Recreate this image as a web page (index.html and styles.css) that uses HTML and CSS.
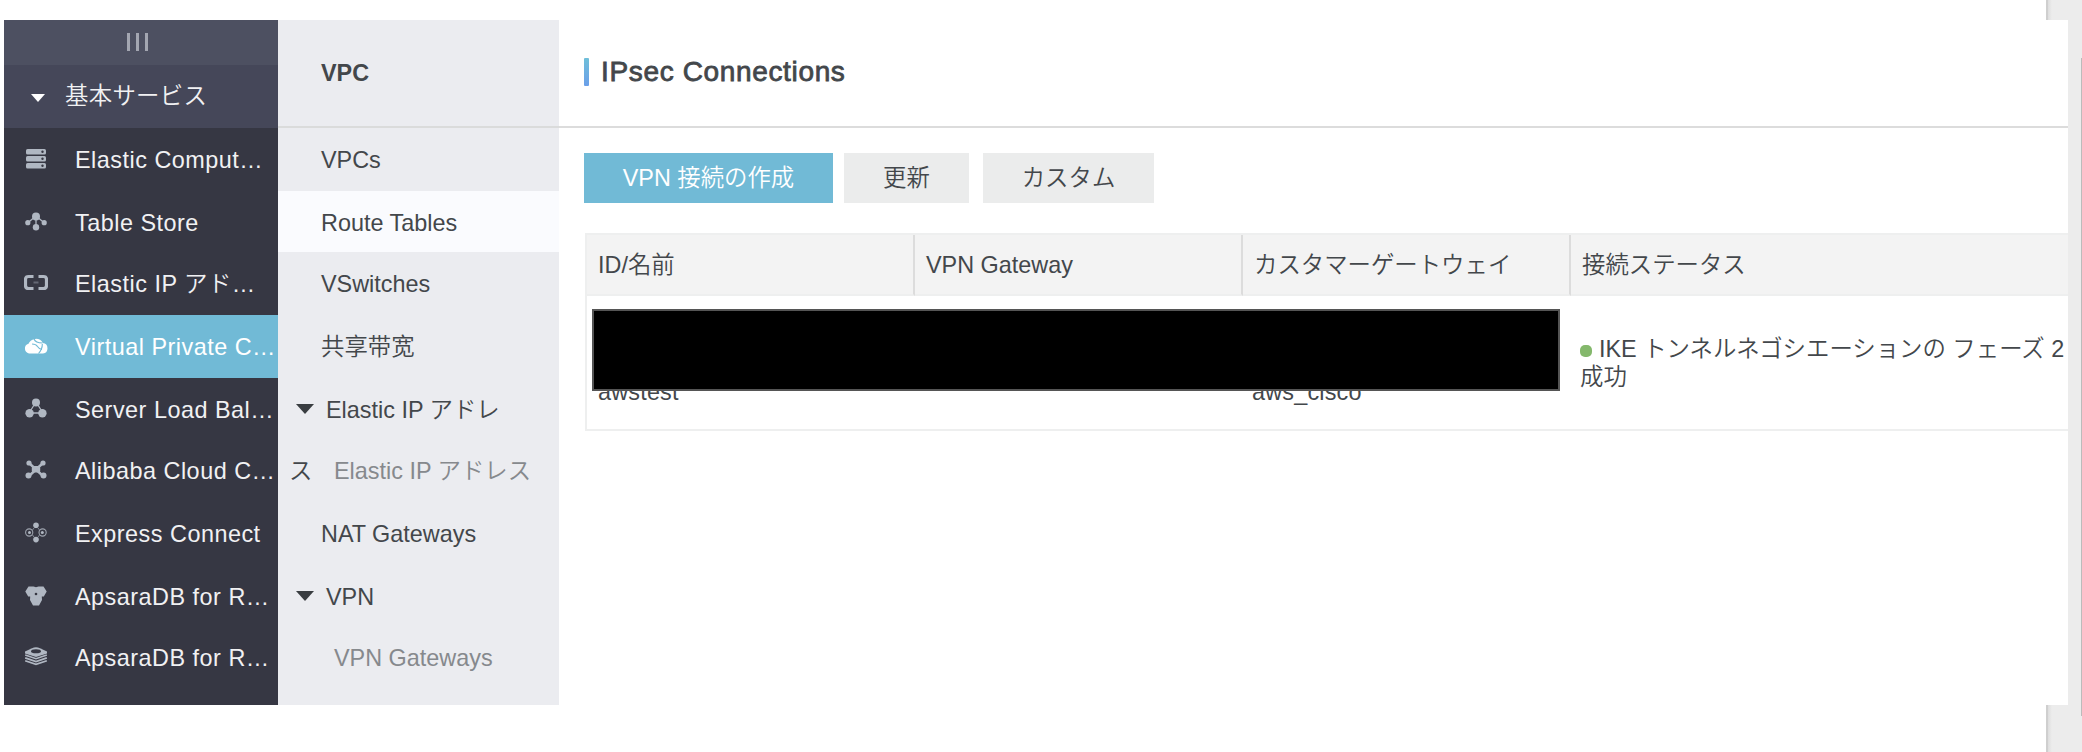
FILE: index.html
```html
<!DOCTYPE html>
<html lang="ja">
<head>
  <meta charset="UTF-8">
  <title>IPsec Connections</title>
  <link rel="stylesheet" href="styles.css">
</head>
<body>
  <div class="scrollbar"></div>
  <div class="console">

    <!-- サービスメニュー -->
    <div class="sidebar">
      <div class="fold"><span></span><span></span><span></span></div>
      <div class="group"><i class="arrow"></i>基本サービス</div>
      <ul>
        <li>
          <svg viewBox="0 0 24 24"><rect x="2" y="2" width="20" height="5.6" rx="1.6"/><rect x="2" y="9" width="20" height="5.6" rx="1.6"/><rect x="2" y="16" width="20" height="5.6" rx="1.6"/><g class="hole"><circle cx="18.5" cy="4.8" r="1.2"/><circle cx="18.5" cy="11.8" r="1.2"/><circle cx="18.5" cy="18.8" r="1.2"/></g></svg>
          <span>Elastic Comput…</span>
        </li>
        <li>
          <svg viewBox="0 0 24 24"><path class="line" d="M12 6L3.5 13M12 6L20.5 13M12 6V18"/><circle cx="12" cy="6.5" r="4"/><circle cx="3.8" cy="12.7" r="2.6"/><circle cx="20.2" cy="12.7" r="2.6"/><circle cx="12" cy="17.2" r="3.2"/></svg>
          <span>Table Store</span>
        </li>
        <li>
          <svg viewBox="0 0 24 24"><path class="bracket" d="M9.5 5.5H4.5Q1.5 5.5 1.5 8.5V14.5Q1.5 17.5 4.5 17.5H9.5M14.5 5.5H19.5Q22.5 5.5 22.5 8.5V14.5Q22.5 17.5 19.5 17.5H14.5"/><path class="dim" d="M9.5 11.5H14.5"/></svg>
          <span>Elastic IP アド…</span>
        </li>
        <li class="active">
          <svg viewBox="0 0 24 24"><path d="M5 19.5A5 5 0 0 1 4.5 9.8A7.8 7.5 0 0 1 18.8 9A5.3 5.3 0 0 1 19 19.5Z"/><path class="cut" d="M10 5Q11.5 9 18.5 9M14.5 19.5Q18.5 15 18.3 10M8 10Q12 10 13.5 12.5T18 15.5"/></svg>
          <span>Virtual Private C…</span>
        </li>
        <li>
          <svg viewBox="0 0 24 24"><path class="line" d="M12 5L5 16H19Z"/><circle cx="12" cy="5.5" r="4"/><circle cx="5.6" cy="16.2" r="4.2"/><circle cx="18.4" cy="16.2" r="4.2"/></svg>
          <span>Server Load Bal…</span>
        </li>
        <li>
          <svg viewBox="0 0 24 24"><path class="thick" d="M5 5L19 18M19 5L5 18"/><rect x="7.8" y="8" width="8.4" height="6.5" rx="2"/><circle cx="5" cy="5" r="2.6"/><circle cx="19" cy="5" r="2.6"/><circle cx="4.5" cy="17.5" r="3"/><circle cx="19.5" cy="17.5" r="3"/></svg>
          <span>Alibaba Cloud C…</span>
        </li>
        <li>
          <svg viewBox="0 0 24 24"><circle class="ring" cx="5.2" cy="11.5" r="3.6"/><circle class="ring" cx="18.6" cy="11.5" r="3.6"/><circle cx="5.5" cy="11.5" r="1.5"/><circle cx="18.3" cy="11.5" r="1.5"/><circle cx="12" cy="4.3" r="2.8"/><circle cx="12" cy="18.6" r="2.8"/><path class="thin" d="M10 7L8.5 9M14 7L15.5 9M10 16L8.5 14M14 16L15.5 14"/></svg>
          <span>Express Connect</span>
        </li>
        <li>
          <svg viewBox="0 0 24 24"><path d="M4.5 2.5H9.5L12 3.2L14.5 2.5H19.5L22.7 7.5L19.8 12.5H17.8L18 16L15 21.5H9L6 16L6.2 12.5H4.2L1.3 7.5Z"/><circle class="hole" cx="12" cy="10" r="1.3"/></svg>
          <span>ApsaraDB for R…</span>
        </li>
        <li>
          <svg viewBox="0 0 24 24"><path d="M1 6.5L8 3.2Q12 1.5 16 3.2L23 6.5V8.5L12 12L1 8.5Z"/><ellipse class="hole" cx="12" cy="6.2" rx="5" ry="2"/><path class="layer" d="M1.2 10L12 13.7L22.8 10M1.2 12.9L12 16.6L22.8 12.9M1.2 15.7L12 19.4L22.8 15.7"/></svg>
          <span>ApsaraDB for R…</span>
        </li>
      </ul>
    </div>

    <!-- VPCメニュー -->
    <div class="subnav">
      <h2>VPC</h2>
      <ul>
        <li>VPCs</li>
        <li class="selected">Route Tables</li>
        <li>VSwitches</li>
        <li lang="zh" class="cn">共享带宽</li>
        <li class="parent"><i class="arrow"></i>Elastic IP アドレ</li>
        <li class="child"><b>ス</b><span>Elastic IP アドレス</span></li>
        <li>NAT Gateways</li>
        <li class="parent"><i class="arrow"></i>VPN</li>
        <li class="child"><b></b><span>VPN Gateways</span></li>
      </ul>
    </div>

    <div class="main">
      <div class="title"><h1>IPsec Connections</h1></div>
      <div class="content">
        <div class="buttons">
          <button class="primary">VPN 接続の作成</button>
          <button class="refresh">更新</button>
          <button class="custom">カスタム</button>
        </div>
        <div class="list">
          <table>
            <tr>
              <th>ID/名前</th>
              <th>VPN Gateway</th>
              <th>カスタマーゲートウェイ</th>
              <th>接続ステータス</th>
            </tr>
            <tr>
              <td class="name">awstest</td>
              <td></td>
              <td class="name customer">aws_cisco</td>
              <td class="status"><i class="dot"></i><span>IKE トンネルネゴシエーションの フェーズ 2</span><br>成功</td>
            </tr>
          </table>
          <div class="mask"></div>
        </div>
      </div>
    </div>

  </div>
</body>
</html>
```

FILE: styles.css
```css
*{box-sizing: border-box;}
body{
  margin: 0;
  height: 752px;
  padding: 20px 0 0 4px;
  position: relative;
  overflow: hidden;
  background-color: #fff;
  color: #43474b;
  font-family: "Liberation Sans", "Noto Sans CJK JP", sans-serif;
  font-size: 23.4px;
  font-weight: 350;
}
ul{
  list-style-type: none;
  margin: 0;
  padding: 0;
}
h1, h2{margin: 0;}

/* 後ろのスクロールバー */
.scrollbar{
  position: absolute;
  top: 0;
  right: 0;
  width: 36px;
  height: 752px;
  background: linear-gradient(to right, #cfcfcf 0, #cfcfcf 2px, #dedede 2px, #ececec 6px);
}
.scrollbar:after{
  content: '';
  position: absolute;
  top: 58px;
  right: 0;
  width: 1px;
  height: 658px;
  background-color: #bbb;
}
.console{
  position: relative;
  display: flex;
  width: 2064px;
  height: 685px;
  background-color: #fff;
}

/* メニューの行 */
.sidebar li, .subnav li{
  display: flex;
  align-items: flex-start;
  height: 63px;
  line-height: 64px;
  white-space: nowrap;
}
.sidebar li:nth-child(3n+2), .subnav li:nth-child(3n+2){height: 61px;}

/* サービスメニュー */
.sidebar{
  width: 274px;
  flex: none;
  background-color: #363743;
  color: #f1f1f3;
}
.fold{
  display: flex;
  justify-content: center;
  gap: 6px;
  height: 45px;
  padding: 13px 8px 0 0;
  background-color: #4d5061;
}
.fold span{
  width: 3px;
  height: 18px;
  background-color: #a3a6b1;
}
.group{
  display: flex;
  align-items: center;
  height: 63px;
  padding-left: 27px;
  background-color: #454759;
  letter-spacing: .3px;
  line-height: 63px;
}
.group .arrow{
  margin: 2px 20px 0 0;
  border: 7px solid transparent;
  border-top: 8px solid #fff;
  border-bottom: 0;
}
.sidebar li{
  padding-left: 20px;
  letter-spacing: .5px;
}
.sidebar li.active{
  background-color: #71bad6;
  color: #fff;
}
.sidebar svg{
  width: 24px;
  height: 24px;
  flex: none;
  margin: 19px 27px 0 0;
  fill: #b0b7c2;
}
.sidebar svg .hole{fill: #363743;}
.sidebar svg .line{fill: none; stroke: #b0b7c2; stroke-width: 1.3;}
.sidebar svg .thick{stroke: #b0b7c2; stroke-width: 2.4;}
.sidebar svg .bracket{fill: none; stroke: #b0b7c2; stroke-width: 3.2;}
.sidebar svg .dim{stroke: #656875; stroke-width: 2;}
.sidebar svg .ring{fill: none; stroke: #9da3ae; stroke-width: 1.1;}
.sidebar svg .thin{stroke: #858b97; stroke-width: 1;}
.sidebar svg .layer{fill: none; stroke: #b0b7c2; stroke-width: 1.7;}
.sidebar .active svg{fill: #fff;}
.sidebar .active .cut{fill: none; stroke: #71bad6; stroke-width: 1.1;}

/* VPCメニュー */
.subnav{
  width: 281px;
  flex: none;
  background-color: #ebecf0;
}
.subnav h2{
  height: 108px;
  padding-left: 43px;
  border-bottom: 2px solid #dadbdb;
  font-size: 23.4px;
  line-height: 106px;
}
.subnav li{padding-left: 43px;}
.subnav .selected{background-color: #fafbfe;}
.subnav .cn{
  font-family: "Noto Sans CJK SC", sans-serif;
  line-height: 61px;
}
.subnav .parent{padding-left: 18px;}
.subnav .arrow{
  margin: 26px 12px 0 0;
  border: 9px solid transparent;
  border-top: 10px solid #393d41;
  border-bottom: 0;
}
.subnav .child{padding-left: 11px;}
.subnav .child b{
  width: 45px;
  font-weight: 350;
}
.subnav .child span{color: #86898d;}

/* コンテンツ */
.main{
  flex: 1;
  min-width: 0;
}
.title{
  display: flex;
  align-items: center;
  height: 108px;
  padding: 0 0 2px 25px;
  border-bottom: 2px solid #dcdcdc;
}
.title:before{
  content: '';
  width: 5px;
  height: 28px;
  border-radius: 1px;
  background: linear-gradient(#6fbfd9, #6b9fe9);
}
.title h1{
  padding-left: 12px;
  font-size: 28px;
  font-weight: normal;
  letter-spacing: .65px;
  -webkit-text-stroke: .8px #43474b;
}
.content{padding: 25px 0 0 25px;}
.buttons{
  display: flex;
  height: 50px;
}
.buttons button{
  border: 0;
  padding: 0;
  background-color: #ebecec;
  color: #43474b;
  font: inherit;
  line-height: 50px;
}
.buttons .primary{
  width: 249px;
  margin-right: 11px;
  background-color: #71bad6;
  color: #fff;
}
.buttons .refresh{
  width: 125px;
  margin-right: 14px;
}
.buttons .custom{width: 171px;}
.list{
  position: relative;
  margin: 30px 0 0 1px;
}
table{
  width: 100%;
  table-layout: fixed;
  border-collapse: separate;
  border-spacing: 0;
  border: 2px solid #eeefef;
  border-right: 0;
}
th{
  width: 328px;
  height: 61px;
  padding: 2px 0 0 11px;
  border-bottom: 2px solid #eeefef;
  background-color: #f3f3f3;
  font-weight: 350;
  line-height: 57px;
  text-align: left;
  white-space: nowrap;
}
th:not(:last-child){border-right: 2px solid #dcdcdc;}
th:last-child{width: auto;}
td{
  height: 133px;
  padding: 0 0 0 11px;
  white-space: nowrap;
}
td.name{
  padding-top: 58px;
  line-height: 28px;
  letter-spacing: .2px;
}
td.customer{padding-left: 9px;}
td.status{
  padding-left: 9px;
  line-height: 28px;
}
.dot{
  display: inline-block;
  width: 12px;
  height: 12px;
  margin-right: 7px;
  border-radius: 5px;
  background-color: #84b86c;
}
/* IDを隠す黒塗り */
.mask{
  position: absolute;
  top: 76px;
  left: 7px;
  width: 968px;
  height: 82px;
  border: 2px solid #555;
  background-color: #000;
}
```
